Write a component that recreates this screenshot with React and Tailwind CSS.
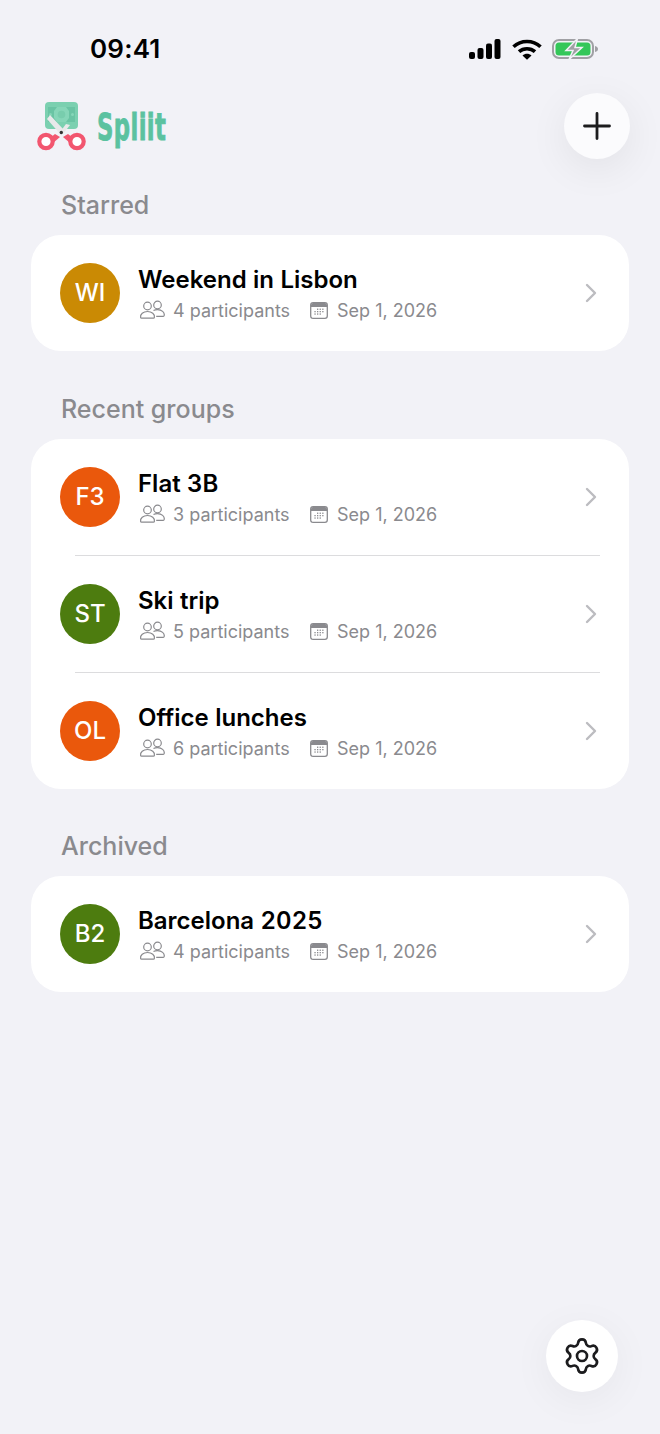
import React from "react";

function People() {
  return (
    <svg width="26" height="20" viewBox="0 0 26 20" fill="none" stroke="#8a8a8e" strokeWidth="1.2" className="shrink-0 ml-[1px]">
      <circle cx="8.500" cy="6" r="3.800" />
      <circle cx="18.500" cy="5" r="3.800" />
      <path d="M1.600 17.300c-.6-3.200 2.600-5.800 6.900-5.800s7.500 2.600 6.900 5.800c-.1.6-.5.800-1 .8H2.600c-.5 0-.9-.2-1-.8z" />
      <path d="M14.500 10.500c1-.5 2.500-.8 4-.8 4.200 0 7.300 2.500 6.700 5.800-.1.6-.5.800-1 .8h-7" />
    </svg>
  );
}

function Calendar() {
  return (
    <svg width="18" height="17" viewBox="0 0 18 17" className="shrink-0">
      <rect x="0.7" y="0.7" width="16.6" height="15.6" rx="2.4" fill="none" stroke="#8a8a8e" strokeWidth="1.3" />
      <path d="M1 3.200a2.200 2.200 0 0 1 2.200-2.200h11.600A2.200 2.200 0 0 1 17 3.200V5H1z" fill="#8a8a8e" />
      <g fill="#8a8a8e">
        <rect x="7" y="6.6" width="1.3" height="1.3" /><rect x="9.6" y="6.6" width="1.3" height="1.3" /><rect x="12.2" y="6.6" width="1.3" height="1.3" />
        <rect x="4.4" y="9" width="1.3" height="1.3" /><rect x="7" y="9" width="1.3" height="1.3" /><rect x="9.6" y="9" width="1.3" height="1.3" /><rect x="12.2" y="9" width="1.3" height="1.3" />
        <rect x="4.4" y="11.4" width="1.3" height="1.3" /><rect x="7" y="11.4" width="1.3" height="1.3" /><rect x="9.6" y="11.4" width="1.3" height="1.3" />
      </g>
    </svg>
  );
}

function Chevron() {
  return (
    <svg width="12" height="20" viewBox="0 0 12 20" fill="none" stroke="#bcbcc0" strokeWidth="2.400" strokeLinecap="round" strokeLinejoin="round" className="shrink-0 mr-[1px] -ml-[1px]">
      <path d="M2 2l8 8-8 8" />
    </svg>
  );
}

function Row({ initials, color, name, count, divider }) {
  return (
    <div className="flex flex-col">
      <div className="flex items-center h-[116px] pl-[29px] pr-[31px]">
        <div className={`w-[60px] h-[60px] rounded-full flex items-center justify-center text-white text-[24px] font-medium shrink-0 ${color}`}>
          {initials}
        </div>
        <div className="ml-[18px] flex-1 flex flex-col">
          <div className="text-[24px] leading-[29px] font-semibold tabular-nums text-black [font-optical-sizing:none]">{name}</div>
          <div className="flex items-center mt-[6px] text-[18px] leading-[22px] text-[#8a8a8e]">
            <span className="-mt-[1px]"><People /></span>
            <span className="ml-[8px] w-[137px]">{count} participants</span>
            <Calendar />
            <span className="ml-[9px]">Sep 1, 2026</span>
          </div>
        </div>
        <Chevron />
      </div>
      {divider && <div className="h-[1px] bg-[#dcdcde] ml-[44px] mr-[29px]" />}
    </div>
  );
}

function Section({ title, mt, children }) {
  return (
    <section className={mt}>
      <h2 className="ml-[30px] text-[25px] leading-[30px] font-medium text-[#8a8a8e]">{title}</h2>
      <div className="mt-[15px] bg-white rounded-[30px] overflow-hidden">{children}</div>
    </section>
  );
}

function Logo() {
  return (
    <div className="flex items-center">
      <svg width="52" height="50" viewBox="0 0 52 50" className="shrink-0">
        <rect x="9" y="0" width="33" height="27" rx="4" fill="#7bd0b0" />
        <path d="M12 5h27v15H12z" fill="#6ac4a4" />
        <path d="M21 5h9l3 4v7l-3 4h-9l-3-4V9z" fill="#86d6b8" />
        <circle cx="25.500" cy="12.500" r="3.800" fill="#78cdad" />
        <circle cx="14.500" cy="12.500" r="1.500" fill="#86d6b8" />
        <circle cx="36.500" cy="12.500" r="1.500" fill="#86d6b8" />
        <path d="M11 17l3-4 14 15-3 5z" fill="#e9e9ea" />
        <path d="M34 23l-7 9-3-2 6-8z" fill="#e9e9ea" />
        <path d="M19 32l5 3-7 6-3-5z" fill="#f2566f" />
        <path d="M32 32l-5 3 7 6 3-5z" fill="#f2566f" />
        <circle cx="25.300" cy="30.500" r="1.700" fill="#333" />
        <circle cx="10" cy="39.500" r="6.700" fill="#fff" stroke="#f2566f" strokeWidth="4.200" />
        <circle cx="41" cy="39.500" r="6.700" fill="#fff" stroke="#f2566f" strokeWidth="4.200" />
      </svg>
      <span
        className="ml-[9px] origin-left inline-block scale-x-[0.6] text-[#5bc2a0] font-bold text-[38px] leading-[44px] tracking-[0.6px] [-webkit-text-stroke:0.9px_#5bc2a0]"
        style={{ fontFamily: "'DejaVu Sans', sans-serif" }}
      >
        Spliit
      </span>
    </div>
  );
}

export default function App() {
  return (
    <div
      className="w-[660px] h-[1434px] bg-[#f2f2f7] flex flex-col overflow-hidden"
      style={{ fontFamily: "Inter, sans-serif" }}
    >
      <div className="flex items-center justify-between h-[34px] mt-[32px] pl-[90px] pr-[62px] shrink-0">
        <span className="text-[26px] leading-[34px] font-semibold text-black tracking-[0.2px]">09:41</span>
        <div className="flex items-center">
          <svg width="32" height="20" viewBox="0 0 32 20" fill="#000">
            <rect x="0" y="13" width="6" height="7" rx="2" />
            <rect x="8.500" y="9" width="6" height="11" rx="2" />
            <rect x="17" y="4.500" width="6" height="15.500" rx="2" />
            <rect x="25.500" y="0" width="6" height="20" rx="2" />
          </svg>
          <svg width="30" height="21" viewBox="0 0 30 21" className="ml-[11px]" fill="none" stroke="#000" strokeWidth="3.600">
            <path d="M1.500 7.800C9 .7 21 .7 28.500 7.800" />
            <path d="M7 12.700c4.400-4 11.600-4 16 0" />
            <path d="M15 20.800l-4.500-4.400c2.500-2.200 6.500-2.200 9 0z" fill="#000" stroke="none" />
          </svg>
          <svg width="46" height="22" viewBox="0 0 46 22" className="ml-[10px]">
            <rect x="1" y="2" width="40" height="18" rx="6" fill="none" stroke="#a0a0a4" strokeWidth="2" />
            <rect x="3.500" y="4.500" width="35" height="13" rx="3.500" fill="#34c759" />
            <path d="M43 8c2 .5 3 1.500 3 3s-1 2.500-3 3z" fill="#a0a0a4" />
            <path d="M25.500 0.500L14 12.500h7L17 21.500 30 9.500h-7z" fill="#a0a0a4" stroke="#f2f2f7" strokeWidth="1.500" />
          </svg>
        </div>
      </div>

      <div className="flex items-start justify-between mt-[27px] pl-[36px] pr-[30px] shrink-0">
        <div className="mt-[9px]"><Logo /></div>
        <button className="w-[66px] h-[66px] rounded-full bg-[#fbfbfd] flex items-center justify-center shadow-[0_10px_40px_rgba(0,0,0,0.07)]">
          <svg width="28" height="28" viewBox="0 0 28 28" stroke="#1c1c1e" strokeWidth="2.800" strokeLinecap="round">
            <path d="M14 1.500v25M1.500 14h25" />
          </svg>
        </button>
      </div>

      <div className="px-[31px] shrink-0">
        <Section title="Starred" mt="mt-[31px]">
          <Row initials="WI" color="bg-[#ca8a04]" name="Weekend in Lisbon" count={4} />
        </Section>
        <Section title="Recent groups" mt="mt-[43px]">
          <Row initials="F3" color="bg-[#ea580c]" name="Flat 3B" count={3} divider />
          <Row initials="ST" color="bg-[#4d7c0f]" name="Ski trip" count={5} divider />
          <Row initials="OL" color="bg-[#ea580c]" name="Office lunches" count={6} />
        </Section>
        <Section title="Archived" mt="mt-[42px]">
          <Row initials="B2" color="bg-[#4d7c0f]" name="Barcelona 2025" count={4} />
        </Section>
      </div>

      <div className="mt-auto mb-[42px] pr-[42px] flex justify-end shrink-0">
        <button className="w-[72px] h-[72px] rounded-full bg-white flex items-center justify-center shadow-[0_8px_40px_rgba(0,0,0,0.05)]">
          <svg width="40" height="40" viewBox="0 0 24 24" fill="none" stroke="#1c1c1e" strokeWidth="1.600" strokeLinecap="round" strokeLinejoin="round">
            <path d="M9.671 4.136a2.34 2.34 0 0 1 4.659 0 2.34 2.34 0 0 0 3.319 1.915 2.34 2.34 0 0 1 2.33 4.033 2.34 2.34 0 0 0 0 3.831 2.34 2.34 0 0 1-2.33 4.033 2.34 2.34 0 0 0-3.319 1.915 2.34 2.34 0 0 1-4.659 0 2.34 2.34 0 0 0-3.320-1.915 2.34 2.34 0 0 1-2.33-4.033 2.34 2.34 0 0 0 0-3.831A2.34 2.34 0 0 1 6.350 6.051a2.34 2.34 0 0 0 3.319-1.915" />
            <circle cx="12" cy="12" r="3" />
          </svg>
        </button>
      </div>
    </div>
  );
}
